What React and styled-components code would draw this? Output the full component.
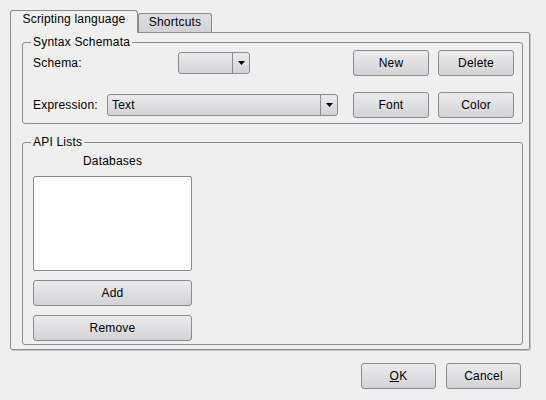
import React from 'react'
import styled, { createGlobalStyle } from 'styled-components'

const GlobalStyle = createGlobalStyle`
  body {
    margin: 0;
    background: #efefef;
    font-family: "Liberation Sans", Arial, sans-serif;
    font-size: 12px;
    letter-spacing: 0.2px;
    color: #000;
  }
`

const line = '#8c8c8c'
const face = 'linear-gradient(#ebebed, #d3d3d7)'

const Dialog = styled.div`
  width: 546px;
  height: 400px;
  box-sizing: border-box;
  padding: 10px 0 0 10px;
`
const TabBar = styled.div`
  display: flex;
  align-items: flex-end;
  height: 22px;
`
const Tab = styled.div`
  position: relative;
  z-index: 1;
  box-sizing: border-box;
  width: ${p => p.$width}px;
  height: ${p => (p.$active ? 23 : 19)}px;
  margin-bottom: ${p => (p.$active ? -1 : 0)}px;
  border: 1px solid ${line};
  border-bottom: none;
  border-radius: 3px 3px 0 0;
  background: ${p => (p.$active ? '#efefef' : 'linear-gradient(#e0e0e3, #d2d2d6)')};
  text-align: center;
  line-height: 16px;
`
const Panel = styled.div`
  box-sizing: border-box;
  width: 520px;
  height: 318px;
  border: 1px solid #8e8e8e;
  border-radius: 0 2px 2px 2px;
  box-shadow: 1px 1px 0 #c4c4c4;
  padding: 2px 6px 4px 11px;
  display: flex;
  flex-direction: column;
  gap: 11px;
`
const Group = styled.fieldset`
  margin: 0;
  min-width: 0;
  border: 1px solid ${line};
  border-radius: 3px;
  padding: ${p => p.$pad};
`
const Legend = styled.legend`
  padding: 0 2px;
  margin-left: -2px;
  line-height: 14px;
`
const Rows = styled.div`
  display: flex;
  flex-direction: column;
  gap: 16px;
`
const Row = styled.div`
  display: flex;
  align-items: center;
  height: 26px;
`
const Label = styled.div`
  width: ${p => p.$width}px;
  flex: none;
`
const Spacer = styled.div`
  flex: 1;
`
const Buttons = styled.div`
  display: flex;
  flex-direction: ${p => (p.$column ? 'column' : 'row')};
  gap: 9px;
`
const Button = styled.button`
  box-sizing: border-box;
  width: ${p => (p.$width ? `${p.$width}px` : '100%')};
  height: 26px;
  padding: 0;
  border: 1px solid #8b8b8b;
  border-radius: 3px;
  background: ${face};
  font: inherit;
  font-weight: 400;
  letter-spacing: inherit;
  color: #000;
  text-align: center;
`
const Combo = styled.div`
  box-sizing: border-box;
  width: ${p => p.$width}px;
  height: 22px;
  display: flex;
  border: 1px solid #8b8b8b;
  border-radius: 3px;
  background: ${face};
`
const ComboValue = styled.div`
  flex: 1;
  padding-left: 4px;
  line-height: 20px;
`
const ComboArrow = styled.div`
  width: 16px;
  border-left: 1px solid #8b8b8b;
  display: flex;
  align-items: center;
  justify-content: center;
`
const ListColumn = styled.div`
  width: 159px;
  display: flex;
  flex-direction: column;
`
const Caption = styled.div`
  text-align: center;
  line-height: 16px;
  margin-bottom: 7px;
`
const ListBox = styled.div`
  box-sizing: border-box;
  height: 95px;
  margin-bottom: 9px;
  background: #fff;
  border: 1px solid ${line};
  border-radius: 2px;
`
const Footer = styled.div`
  width: 511px;
  margin-top: 13px;
  display: flex;
  justify-content: flex-end;
  gap: 10px;
`

const DropDown = ({ width, value }) => (
  <Combo $width={width}>
    <ComboValue>{value}</ComboValue>
    <ComboArrow>
      <svg width="7" height="4" viewBox="0 0 7 4">
        <polygon points="0,0 7,0 3.5,4" fill="#000" />
      </svg>
    </ComboArrow>
  </Combo>
)

export default function App() {
  return (
    <Dialog>
      <GlobalStyle />
      <TabBar>
        <Tab $active $width={128}>Scripting language</Tab>
        <Tab $width={74}>Shortcuts</Tab>
      </TabBar>
      <Panel>
        <Group $pad="1px 8px 5px 10px">
          <Legend>Syntax Schemata</Legend>
          <Rows>
            <Row>
              <Label $width={145}>Schema:</Label>
              <DropDown width={72} value="" />
              <Spacer />
              <Buttons>
                <Button $width={76}>New</Button>
                <Button $width={76}>Delete</Button>
              </Buttons>
            </Row>
            <Row>
              <Label $width={74}>Expression:</Label>
              <DropDown width={231} value="Text" />
              <Spacer />
              <Buttons>
                <Button $width={76}>Font</Button>
                <Button $width={76}>Color</Button>
              </Buttons>
            </Row>
          </Rows>
        </Group>
        <Group $pad="4px 0 3px 10px">
          <Legend>API Lists</Legend>
          <ListColumn>
            <Caption>Databases</Caption>
            <ListBox />
            <Buttons $column>
              <Button>Add</Button>
              <Button>Remove</Button>
            </Buttons>
          </ListColumn>
        </Group>
      </Panel>
      <Footer>
        <Button $width={75}><u>O</u>K</Button>
        <Button $width={75}>Cancel</Button>
      </Footer>
    </Dialog>
  )
}
